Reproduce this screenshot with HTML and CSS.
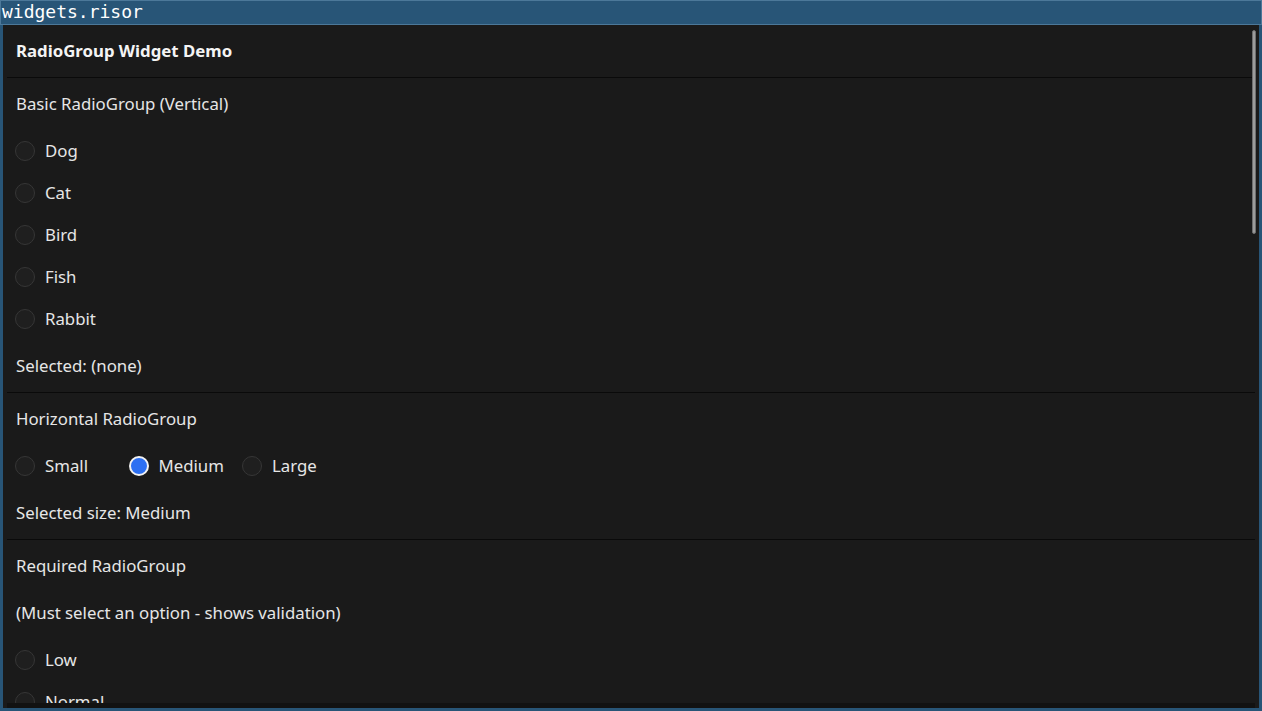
FILE: index.html
```html
<!DOCTYPE html>
<html lang="en">
<head>
    <meta charset="UTF-8">
    <meta name="viewport" content="width=device-width, initial-scale=1.0">
    <title>widgets.risor</title>
    <link rel="stylesheet" href="styles.css">
</head>
<body>
    <div class="window">
        <header class="titlebar">widgets.risor</header>

        <div class="client">
            <main class="viewport">
                <section class="panel">
                    <div class="demo-title">RadioGroup Widget Demo</div>
                </section>

                <section class="panel">
                    <div class="label">Basic RadioGroup (Vertical)</div>
                    <div class="radio-group">
                        <div class="option"><span class="radio"></span><span>Dog</span></div>
                        <div class="option"><span class="radio"></span><span>Cat</span></div>
                        <div class="option"><span class="radio"></span><span>Bird</span></div>
                        <div class="option"><span class="radio"></span><span>Fish</span></div>
                        <div class="option"><span class="radio"></span><span>Rabbit</span></div>
                    </div>
                    <div class="label">Selected: (none)</div>
                </section>

                <section class="panel">
                    <div class="label">Horizontal RadioGroup</div>
                    <div class="radio-group horizontal">
                        <div class="option"><span class="radio"></span><span>Small</span></div>
                        <div class="option"><span class="radio checked"></span><span>Medium</span></div>
                        <div class="option"><span class="radio"></span><span>Large</span></div>
                    </div>
                    <div class="label">Selected size: Medium</div>
                </section>

                <section class="panel">
                    <div class="label">Required RadioGroup</div>
                    <div class="label">(Must select an option - shows validation)</div>
                    <div class="radio-group">
                        <div class="option"><span class="radio"></span><span>Low</span></div>
                        <div class="option"><span class="radio"></span><span>Normal</span></div>
                    </div>
                </section>
            </main>

            <div class="scroll-thumb"></div>
            <div class="hscroll"></div>
        </div>
    </div>
</body>
</html>
```

FILE: styles.css
```css
* {
    margin: 0;
    padding: 0;
    box-sizing: border-box;
}

body {
    width: 1262px;
    height: 711px;
    overflow: hidden;
    background: #285577;
    font-family: 'Noto Sans', 'Open Sans', sans-serif;
    font-size: 16.8px;
    color: #e6e6e6;
}

.window {
    height: 100%;
    display: flex;
    flex-direction: column;
    background: #285577;
}

.titlebar {
    height: 25px;
    flex-shrink: 0;
    padding-left: 1px;
    border: 1px solid #4c7899;
    background: #285577;
    color: #ffffff;
    font-family: 'DejaVu Sans Mono', monospace;
    font-size: 18px;
    line-height: 21px;
}

.client {
    flex: 1;
    margin: 0 3px 3px;
    background: #1a1a1a;
    display: flex;
    flex-direction: column;
    position: relative;
    min-height: 0;
}

.viewport {
    flex: 1;
    min-height: 0;
    overflow: hidden;
    padding: 0 4px;
}

.panel {
    padding: 15px 8px;
    display: flex;
    flex-direction: column;
    gap: 25px;
}

.panel + .panel {
    border-top: 1px solid #0a0a0a;
}

.demo-title {
    padding-left: 1px;
    font-weight: 700;
    line-height: 22px;
    color: #f4f4f4;
}

.label {
    padding-left: 1px;
    line-height: 22px;
}

.radio-group {
    display: flex;
    flex-direction: column;
    gap: 20px;
}

.radio-group.horizontal {
    flex-direction: row;
    gap: 13.5px;
}

.radio-group.horizontal .option {
    width: 100px;
}

.option {
    display: flex;
    align-items: center;
    gap: 10px;
    height: 22px;
    line-height: 22px;
}

.radio {
    width: 20px;
    height: 20px;
    flex-shrink: 0;
    border-radius: 50%;
    border: 1px solid #363636;
    background: #1f1f1f;
}

.radio.checked {
    border: 2px solid #f2f2f2;
    background: #2c6ff2;
}

.scroll-thumb {
    position: absolute;
    top: 5px;
    right: 3px;
    width: 4px;
    height: 204px;
    border-radius: 2px;
    background: #9c9c9c;
    border: 1px solid #6e6e6e;
}

.hscroll {
    height: 5px;
    flex-shrink: 0;
    margin: 0 4px;
    background: #121212;
}
```
